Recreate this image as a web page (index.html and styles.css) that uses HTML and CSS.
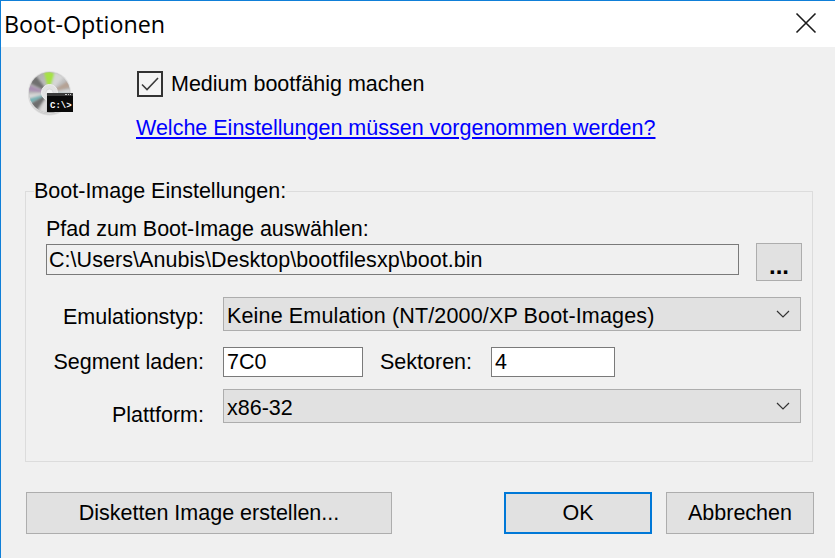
FILE: index.html
```html
<!DOCTYPE html>
<html lang="de">
<head>
<meta charset="utf-8">
<title>Boot-Optionen</title>
<link rel="stylesheet" href="styles.css">
</head>
<body>
<div class="window">
  <header class="titlebar">
    <span class="title">Boot-Optionen</span>
    <svg class="close" width="22" height="22" viewBox="0 0 22 22"><path d="M1.500 1.500 20.500 20.500M20.500 1.500 1.500 20.500" stroke="#1a1a1a" stroke-width="1.600" fill="none"/></svg>
  </header>
  <main class="content">
    <section class="intro">
      <svg class="disc" width="48" height="48" viewBox="0 0 48 48">
        <defs>
          <radialGradient id="sh" cx="0.5" cy="0.5" r="0.5"><stop offset="0.85" stop-color="#777" stop-opacity="0.55"/><stop offset="1" stop-color="#888" stop-opacity="0"/></radialGradient>
          <linearGradient id="bodyg" x1="0" y1="0" x2="1" y2="1"><stop offset="0" stop-color="#a8a8a8"/><stop offset="0.5" stop-color="#c4c4c4"/><stop offset="1" stop-color="#8e8e8e"/></linearGradient>
          <filter id="blur" x="-10%" y="-10%" width="120%" height="120%"><feGaussianBlur stdDeviation="0.900"/></filter>
          <clipPath id="discclip"><circle cx="22.500" cy="21.500" r="20.500"/></clipPath>
        </defs>
        <ellipse cx="22.500" cy="24" rx="22" ry="21" fill="url(#sh)"/>
        <circle cx="22.500" cy="21.500" r="21.500" fill="#dedede"/>
        <circle cx="22.500" cy="21.500" r="20.500" fill="url(#bodyg)"/>
        <g clip-path="url(#discclip)"><g filter="url(#blur)">
          <path d="M22 22 17 1Q24 0 28 3Z" fill="#a6e244"/>
          <path d="M22 22 28 1 37 6Z" fill="#d6d6d6"/>
          <path d="M22 22 9 5Q5 8 3 12Z" fill="#6f6f6f"/>
          <path d="M22 22 2 14Q1 17 1 20Z" fill="#a98fb2"/>
          <path d="M22 22 1 23 1 28Z" fill="#d8d8d8"/>
          <path d="M22 22 1 28Q1 30 3 32Z" fill="#6fb3b5"/>
          <path d="M22 22 3 33Q6 37 10 39Z" fill="#6e6e6e"/>
          <path d="M22 22 41 10Q43 13 44 16Z" fill="#b5a294"/>
          <path d="M22 22 44 18 44 22Z" fill="#dcdcdc"/>
          <path d="M22 22 44 23 44 28Z" fill="#6fb3b5"/>
          <path d="M22 22 12 40 20 43Z" fill="#dcdcdc"/>
        </g></g>
        <circle cx="22.500" cy="21.500" r="8" fill="#e2e2e2" stroke="#efefef"/>
        <circle cx="22.500" cy="21.500" r="3.500" fill="#f2f2f2" stroke="#c4c4c4" stroke-width="0.500"/>
        <rect x="20" y="22" width="26" height="19" fill="#0a0a0a"/>
        <rect x="20" y="22" width="26" height="3" fill="#3a3a3a"/>
        <path class="term-dots" d="M38 23.500h2M41 23.500h1M43 23.500h1"/>
        <text class="disc-text" x="23" y="37">C:\&gt;</text>
      </svg>
      <div class="intro-text">
        <label class="check-row">
          <span class="checkbox"><svg width="18" height="14" viewBox="0 0 18 14"><path d="M1 7.500 6 12.500 17 1" stroke="#3c3c3c" stroke-width="1.600" fill="none"/></svg></span>
          <span>Medium bootfähig machen</span>
        </label>
        <a class="help" href="#">Welche Einstellungen müssen vorgenommen werden?</a>
      </div>
    </section>

    <fieldset class="group">
      <legend class="legend">Boot-Image Einstellungen:</legend>
      <div class="path-label">Pfad zum Boot-Image auswählen:</div>
      <div class="path-row">
        <div class="field path"><span class="nudge-1">C:\Users\Anubis\Desktop\bootfilesxp\boot.bin</span></div>
        <button class="btn dots" type="button">...</button>
      </div>
      <div class="form-row emu">
        <span class="label nudge-3">Emulationstyp:</span>
        <div class="select sel-emu"><span class="sel-text wide">Keine Emulation (NT/2000/XP Boot-Images)</span><svg width="14" height="8" viewBox="0 0 14 8"><path d="M1 1 7 7 13 1" stroke="#333" stroke-width="1.200" fill="none"/></svg></div>
      </div>
      <div class="form-row seg">
        <span class="label">Segment laden:</span>
        <div class="field small seg-field">7C0</div>
        <span class="sec-label">Sektoren:</span>
        <div class="field small sec-field">4</div>
      </div>
      <div class="form-row plat">
        <span class="label plat-label">Plattform:</span>
        <div class="select sel-plat"><span class="sel-text">x86-32</span><svg width="14" height="8" viewBox="0 0 14 8"><path d="M1 1 7 7 13 1" stroke="#333" stroke-width="1.200" fill="none"/></svg></div>
      </div>
    </fieldset>

    <footer class="actions">
      <button class="btn floppy" type="button">Disketten Image erstellen...</button>
      <button class="btn ok" type="button">OK</button>
      <button class="btn cancel" type="button">Abbrechen</button>
    </footer>
  </main>
</div>
</body>
</html>
```
FILE: styles.css
```css
* { box-sizing: border-box; }
html, body { margin: 0; padding: 0; }
body {
  width: 835px;
  height: 558px;
  overflow: hidden;
  font-family: "Liberation Sans", Arial, sans-serif;
  font-size: 21.5px;
  color: #000;
  background: #f0f0f0;
}
.window {
  width: 835px;
  height: 558px;
  display: flex;
  flex-direction: column;
  border-top: 1px solid #0f7fd8;
  border-left: 1px solid #0f7fd8;
}
.titlebar {
  height: 46px;
  flex: none;
  background: #fff;
  display: flex;
  align-items: center;
  justify-content: space-between;
  padding: 0 18px 0 3px;
}
.title {
  font-family: "Open Sans", "Noto Sans", sans-serif;
  font-size: 23.300px;
  color: #000;
}
.close { display: block; margin-bottom: 2px; }
.content {
  flex: 1;
  display: flex;
  flex-direction: column;
  padding: 0 0 0 24px;
}
.intro {
  display: flex;
  height: 138px;
  padding-top: 24px;
}
.disc { margin: 0 0 0 2px; flex: none; }
.intro-text {
  margin-left: 62px;
  display: flex;
  flex-direction: column;
}
.check-row {
  display: flex;
  align-items: center;
  gap: 8px;
  height: 26px;
}
.checkbox {
  width: 26px;
  height: 26px;
  border: 2px solid #333;
  background: #f4f4f4;
  display: flex;
  align-items: center;
  justify-content: center;
}
.help {
  margin-top: 19px;
  color: #0000ff;
  text-decoration: underline;
  margin-left: -1px;
}
.group {
  margin: -5px 0 0;
  padding: 0 10px 0 20px;
  width: 788px;
  height: 282px;
  border: 1px solid #dcdcdc;
  min-width: 0;
}
.legend {
  margin-left: -12px;
  padding: 0;
  font-size: 21.500px;
  line-height: 22px;
}
.path-label {
  margin-top: 16px;
  line-height: 22px;
}
.path-row {
  display: flex;
  align-items: flex-start;
  margin-top: 4px;
}
.field {
  background: #f0f0f0;
  border: 1px solid #7a7a7a;
  display: flex;
  align-items: center;
  padding-left: 3px;
  white-space: nowrap;
}
.path { width: 694px; height: 31px; padding-left: 2px; letter-spacing: 0.05px; }
.nudge-1 { padding-top: 2px; }
.nudge-3 { padding-top: 6px; }
.btn {
  font-family: inherit;
  font-size: 21.500px;
  color: #000;
  background: #e1e1e1;
  border: 1px solid #adadad;
  padding: 0;
}
.dots { width: 46px; height: 38px; margin: -1px 0 0 17px; font-weight: bold; font-size: 24px; padding-top: 8px; }
.form-row { display: flex; align-items: center; }
.label { width: 182px; text-align: right; flex: none; }
.select {
  width: 578px;
  background: #e1e1e1;
  border: 1px solid #adadad;
  display: flex;
  align-items: center;
  justify-content: space-between;
  padding: 0 10px 0 3px;
  margin-left: 19px;
}
.sel-text { padding-top: 4px; }
.wide { letter-spacing: 0.150px; }
.emu { margin-top: 16px; height: 34px; margin-left: -24px; }
.sel-emu, .sel-plat { height: 34px; }
.seg { margin-top: 16px; height: 30px; margin-left: -24px; }
.small { height: 30px; background: #fff; }
.seg-field { width: 140px; margin-left: 19px; }
.sec-label { margin-left: 17px; width: 111px; }
.sec-field { width: 124px; }
.plat { margin-top: 12px; height: 34px; margin-left: -24px; }
.plat-label { padding-top: 18px; }
.actions {
  display: flex;
  margin-top: 30px;
  align-items: flex-start;
}
.actions .btn { height: 42px; }
.floppy { width: 366px; margin-left: 1px; }
.ok {
  width: 148px;
  margin-left: 112px;
  border: 2px solid #0078d7 !important;
}
.cancel { width: 148px; margin-left: 14px; }
.disc-text {
  font-family: "Liberation Mono", monospace;
  font-size: 9px;
  font-weight: bold;
  fill: #fff;
}
.term-dots { stroke: #cfcfcf; stroke-width: 1; fill: none; }
```
